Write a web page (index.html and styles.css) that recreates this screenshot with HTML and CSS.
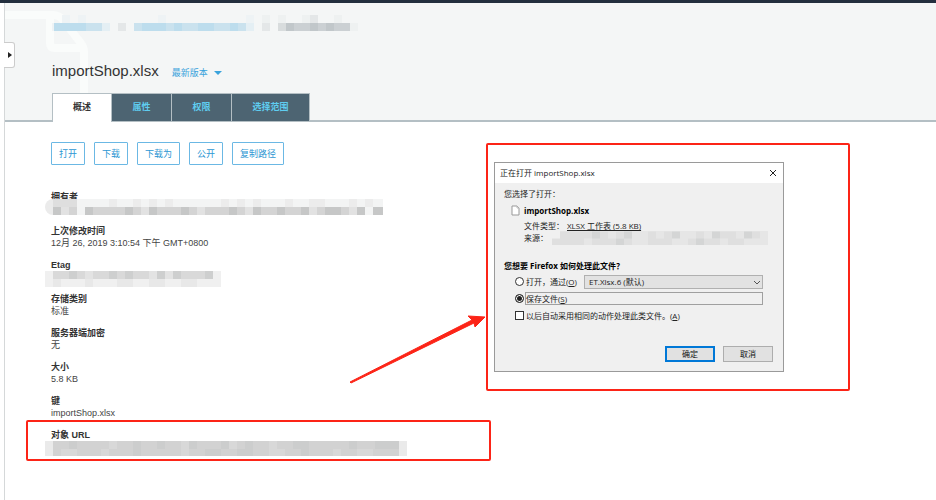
FILE: index.html
```html
<!DOCTYPE html>
<html lang="zh-CN">
<head>
    <meta charset="UTF-8">
    <meta name="viewport" content="width=device-width, initial-scale=1.0">
    <title>importShop.xlsx</title>
    <link rel="stylesheet" href="styles.css">
</head>
<body>
    <div class="topbar"></div>
    <div class="page">
        <button class="handle" aria-label="展开">
            <svg width="4" height="6"><path d="M0 0l4 3-4 3z" fill="#222"/></svg>
        </button>

        <header class="header">
            <svg class="watermark" width="84" height="90" fill="none" stroke="#fafcfb" stroke-width="8">
                <path d="M0 12h48q6 0 10 5l17 22q4 5 4 10v41"/>
                <path d="M45 12v28q0 5 5 5h29"/>
            </svg>
            <svg class="breadcrumb" width="312" height="17" fill="none" stroke-width="8">
                <path stroke="#bddded" d="M2 13h32M90 13h24M122 13h8M146 13h16M178 13h8"/>
                <path stroke="#cae2ee" d="M34 13h16M82 13h8M114 13h8M130 13h16M162 13h16M186 13h8"/>
                <path stroke="#e4eff4" d="M50 13h8M194 13h8"/>
                <path stroke="#eef3f5" d="M0 13h2M10 5h8M26 5h8M106 5h8M194 5h8"/>
                <path stroke="#e4e7e8" d="M66 13h8M210 13h8M258 5h8"/>
                <path stroke="#eef1f1" d="M210 5h8M226 5h8M250 5h8M282 5h8M298 13h8"/>
                <path stroke="#d8dcdd" d="M226 13h8"/>
                <path stroke="#c1c7ca" d="M234 13h8M258 13h8M274 13h8"/>
                <path stroke="#cbd0d3" d="M242 13h16M266 13h8M282 13h16"/>
            </svg>
            <div class="title-row">
                <h1>importShop.xlsx</h1>
                <a class="version" href="#">最新版本
                    <svg width="8" height="4"><path d="M0 0h8L4 4z" fill="#3aa3dc"/></svg>
                </a>
            </div>
            <nav class="tabs">
                <a class="tab active" href="#">概述</a>
                <a class="tab" href="#">属性</a>
                <a class="tab" href="#">权限</a>
                <a class="tab wide" href="#">选择范围</a>
            </nav>
        </header>

        <main class="main">
            <section class="info">
                <div class="actions">
                    <button>打开</button>
                    <button>下载</button>
                    <button>下载为</button>
                    <button>公开</button>
                    <button>复制路径</button>
                </div>
                <dl class="details">
                    <div class="item">
                        <dt>拥有者</dt>
                        <dd class="masked raised">
                            <svg width="338" height="16" fill="none" stroke-width="8">
                                <path stroke="#f3f4f4" stroke-width="16" d="M8 8h330"/>
                                <path stroke="#ebebeb" stroke-width="16" stroke-linecap="round" d="M8 8h8"/>
                                <path stroke="#dedede" d="M8 4h24"/>
                                <path stroke="#ececec" d="M64 4h8M88 4h8M104 4h8M120 4h8M176 4h8M192 4h8M208 4h8M240 4h8M264 4h16M304 4h8M320 4h8"/>
                                <path stroke="#d4d4d4" d="M24 12h8M40 12h272M330 12h8"/>
                                <path stroke="#c6c7c7" d="M8 12h8M40 12h8M80 12h8M104 12h8M136 12h8M184 12h8M208 12h8M232 12h8M256 12h8M280 12h16M312 12h8M328 12h10"/>
                                <path stroke="#e2e2e2" d="M16 12h8M96 12h8M152 12h8M200 12h8M264 12h8M304 12h8"/>
                            </svg>
                        </dd>
                    </div>
                    <div class="item">
                        <dt>上次修改时间</dt>
                        <dd>12月 26, 2019 3:10:54 下午 GMT+0800</dd>
                    </div>
                    <div class="item">
                        <dt>Etag</dt>
                        <dd class="masked">
                            <svg width="176" height="16" fill="none" stroke-width="8">
                                <path stroke="#f0f0f0" stroke-width="16" d="M0 8h176"/>
                                <path stroke="#d9d9d9" d="M8 4h160"/>
                                <path stroke="#cecfcf" d="M24 4h8M64 4h8M80 4h8M112 4h8M128 4h8M160 4h8"/>
                                <path stroke="#e3e3e3" d="M40 4h8M104 4h8M120 4h8"/>
                                <path stroke="#e8e8e8" d="M8 12h8M40 12h8M72 12h16M104 12h16M136 12h16"/>
                            </svg>
                        </dd>
                    </div>
                    <div class="item">
                        <dt>存储类别</dt>
                        <dd>标准</dd>
                    </div>
                    <div class="item">
                        <dt>服务器端加密</dt>
                        <dd>无</dd>
                    </div>
                    <div class="item">
                        <dt>大小</dt>
                        <dd>5.8 KB</dd>
                    </div>
                    <div class="item">
                        <dt>键</dt>
                        <dd>importShop.xlsx</dd>
                    </div>
                    <div class="item marked">
                        <dt>对象 URL</dt>
                        <dd class="masked">
                            <svg width="362" height="15" fill="none" stroke-width="8">
                                <path stroke="#eaeaea" stroke-width="16" d="M0 8h362"/>
                                <path stroke="#d2d2d2" stroke-width="16" d="M8 8h346"/>
                                <path stroke="#cccdcd" d="M24 4h8M88 4h8M112 4h8M144 4h8M176 4h8M200 4h8M248 4h16M304 4h8M330 4h24M88 12h8M160 12h16M192 12h16M256 12h8"/>
                                <path stroke="#d8d8d8" d="M64 4h8M136 4h8M184 4h8M224 4h8M16 12h16M56 12h8M136 12h8M224 12h16M288 12h8M312 12h16"/>
                            </svg>
                        </dd>
                    </div>
                </dl>
                <svg class="arrow" width="136" height="70">
                    <path d="M0 67L122 5l-4-4 17 1-10 10-1-4L1 68z" fill="#fc2417" stroke="#fc2417"/>
                </svg>
            </section>

            <section class="callout">
                <form class="dialog">
                    <div class="dialog-title">
                        <span>正在打开 importShop.xlsx</span>
                        <button type="button" class="close" aria-label="关闭">
                            <svg width="8" height="8"><path d="M1 1l6 6M7 1L1 7" stroke="#222"/></svg>
                        </button>
                    </div>
                    <div class="dialog-body">
                        <p>您选择了打开：</p>
                        <div class="file">
                            <svg class="file-icon" width="9" height="11"><path d="M1 1h5l2 2v7H1z" fill="#fff" stroke="#999"/><path d="M6 1v2h2" fill="none" stroke="#bbb"/></svg>
                            <div class="file-info">
                                <strong>importShop.xlsx</strong>
                                <p class="type">文件类型：<u>XLSX 工作表 (5.8 KB)</u></p>
                                <p class="source">来源：
                                    <svg width="216" height="14" fill="none" stroke-width="7" viewBox="0 0 432 28">
                                        <g transform="scale(2)">
                                            <path stroke="#e6e6e6" stroke-width="14" d="M8 7h208"/>
                                            <path stroke="#dfdfdf" d="M8 4h48M64 4h16M96 4h8M112 4h8M144 4h8M168 4h16M200 4h8M0 11h32M40 11h24M72 11h8M96 11h24M136 11h32M176 11h16"/>
                                            <path stroke="#d4d5d5" d="M40 4h8M72 4h8M120 4h8M160 4h8M192 4h8M64 11h8M144 11h8"/>
                                        </g>
                                    </svg>
                                </p>
                            </div>
                        </div>
                        <p class="question">您想要 Firefox 如何处理此文件？</p>
                        <div class="option">
                            <input type="radio" name="action" id="open">
                            <label for="open">打开，通过(<u>O</u>)</label>
                            <span class="select">
                                <select aria-label="应用程序"><option>ET.Xlsx.6 (默认)</option></select>
                                <svg width="7" height="4"><path d="M0 0l3 3 3-3" fill="none" stroke="#555"/></svg>
                            </span>
                        </div>
                        <div class="option">
                            <input type="radio" name="action" id="save" checked>
                            <label class="focused" for="save">保存文件(<u>S</u>)</label>
                        </div>
                        <div class="option">
                            <input type="checkbox" id="always">
                            <label for="always">以后自动采用相同的动作处理此类文件。(<u>A</u>)</label>
                        </div>
                        <div class="dialog-buttons">
                            <button type="button" class="default">确定</button>
                            <button type="button">取消</button>
                        </div>
                    </div>
                </form>
            </section>
        </main>
    </div>
</body>
</html>
```
FILE: styles.css
```css
* {
    box-sizing: border-box;
}

body {
    margin: 0;
    background-color: #ffffff;
    font-family: "Liberation Sans", "Noto Sans CJK SC", sans-serif;
    font-size: 9px;
    line-height: 12px;
    color: #444444;
}

h1, p, dl, dd {
    margin: 0;
}

svg {
    display: block;
    flex: none;
}

button, input, select {
    font: inherit;
    margin: 0;
    padding: 0;
}

a {
    text-decoration: none;
}

.topbar {
    height: 3px;
    background-color: #232f3e;
}

.page {
    position: relative;
    min-height: calc(100vh - 3px);
    margin-left: 4px;
    border-left: 1px solid #d5d8d9;
}

.handle {
    position: absolute;
    z-index: 1;
    top: 39px;
    left: -1px;
    width: 11px;
    height: 26px;
    padding-left: 4px;
    background-color: #ffffff;
    border: 1px solid #cccccc;
    border-left: none;
    border-radius: 0 3px 3px 0;
}

/* Cabecera */
.header {
    position: relative;
    padding: 11px 0 0 47px;
    background-color: #f4f6f6;
    border-bottom: 2px solid #b4bfc4;
}

.watermark {
    position: absolute;
    top: 0;
    left: 0;
}

.breadcrumb {
    position: relative;
}

.title-row {
    position: relative;
    display: flex;
    align-items: center;
    gap: 13px;
    height: 24px;
    margin-top: 28px;
    line-height: 24px;
}

h1 {
    font-size: 15px;
    font-weight: normal;
    color: #333333;
}

.version {
    display: flex;
    align-items: center;
    gap: 6px;
    padding-top: 3px;
    color: #3aa3dc;
}

.tabs {
    position: relative;
    display: flex;
    margin: 10px 0 -2px;
}

.tab {
    width: 60px;
    height: 29px;
    border: 1px solid #b4bfc4;
    border-left: none;
    background-color: #4d6472;
    color: #5fcdf0;
    font-weight: bold;
    line-height: 27px;
    text-align: center;
}

.tab.active {
    border-left: 1px solid #b4bfc4;
    border-bottom: none;
    background-color: #ffffff;
    color: #333333;
}

.tab.wide {
    width: 78px;
}

/* Contenido */
.main {
    display: flex;
    align-items: flex-start;
    padding: 20px 86px 39px 21px;
}

.info {
    position: relative;
    flex: 1;
}

.actions {
    display: flex;
    gap: 9px;
    padding-left: 25px;
}

.actions button {
    height: 23px;
    padding: 0 7px;
    background-color: #ffffff;
    border: 1px solid #6bb8e4;
    border-radius: 1px;
    color: #2e97d3;
}

.details {
    margin-top: 26px;
}

.item {
    margin-bottom: 10px;
    padding-left: 25px;
}

dt {
    font-weight: bold;
    color: #333333;
}

dd {
    height: 12px;
}

.masked {
    margin-left: -6px;
}

.raised {
    position: relative;
    top: -4px;
}

.marked {
    margin: -9px -5px 0 0;
    padding: 7px 0 6px 23px;
    border: 2px solid #fc2417;
    border-radius: 2px;
}

.arrow {
    position: absolute;
    top: 173px;
    right: 0;
}

/* Ventana de descarga */
.callout {
    width: 364px;
    margin-top: 1px;
    padding: 17px 64px 17px 6px;
    border: 2px solid #fc2417;
    border-radius: 2px;
}

.dialog {
    border: 1px solid #9a9a9a;
    background-color: #f0f0f0;
    font-family: "Open Sans", "Noto Sans CJK SC", sans-serif;
    font-size: 8px;
    color: #222222;
}

.dialog-title {
    display: flex;
    align-items: center;
    justify-content: space-between;
    height: 20px;
    padding: 0 6px 0 5px;
    background-color: #ffffff;
}

.close {
    background: none;
    border: none;
}

.dialog-body {
    padding: 5px 10px 9px 9px;
}

.file {
    display: flex;
    gap: 4px;
    margin: 5px 0 0 7px;
}

.file-info {
    flex: 1;
}

.file-info strong {
    display: block;
    color: #000000;
}

.type {
    display: flex;
    gap: 3px;
    margin-top: 3px;
}

.source {
    display: flex;
    gap: 4px;
}

.source svg {
    margin-top: -1px;
}

.question {
    margin: 15px 0 3px;
    font-weight: bold;
    color: #000000;
}

.option {
    display: flex;
    align-items: center;
    height: 13px;
    margin: 0 10px 4px 11px;
}

.option input {
    appearance: none;
    flex: none;
    width: 9px;
    height: 9px;
    margin-right: 1px;
    background-color: #ffffff;
    border: 1px solid #333333;
}

.option input[type="radio"] {
    border-radius: 50%;
}

.option input[type="radio"]:checked {
    background-color: #222222;
    box-shadow: inset 0 0 0 1px #ffffff;
}

.option label {
    padding-left: 1px;
}

.option .focused {
    flex: 1;
    line-height: 11px;
    border: 1px solid #a0a0a0;
    padding-left: 0;
}

.select {
    position: relative;
    flex: 1;
    margin-left: 7px;
}

.select select {
    display: block;
    appearance: none;
    width: 100%;
    height: 14px;
    padding-left: 4px;
    background-color: #e2e2e2;
    border: 1px solid #b0b0b0;
    border-radius: 0;
    color: inherit;
}

.select svg {
    position: absolute;
    top: 6px;
    right: 2px;
    pointer-events: none;
}

.dialog-buttons {
    display: flex;
    justify-content: flex-end;
    gap: 8px;
    margin-top: 24px;
}

.dialog-buttons button {
    width: 50px;
    height: 16px;
    background-color: #e1e1e1;
    border: 1px solid #adadad;
    color: #111111;
}

.dialog-buttons .default {
    border: 2px solid #0078d7;
}
```
